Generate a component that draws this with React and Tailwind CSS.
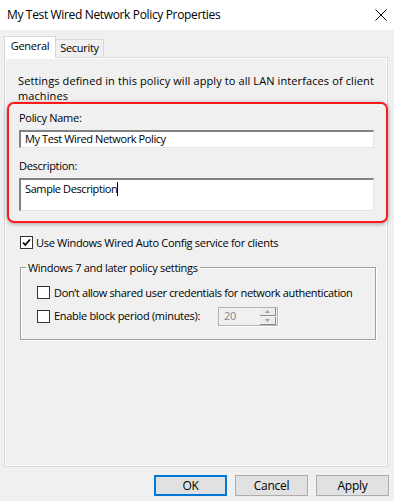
import React from "react";

const Check = ({ checked }) => (
  <span className="w-[13px] h-[13px] border border-[#333333] bg-white flex items-center justify-center shrink-0">
    {checked && (
      <svg width="9" height="9" viewBox="0 0 9 9">
        <polyline points="1,4.5 3.3,7 8,1.5" fill="none" stroke="#000" strokeWidth="1.8" />
      </svg>
    )}
  </span>
);

const Btn = ({ children, primary }) => (
  <button
    className={
      primary
        ? "w-[73px] h-[21px] bg-[#e1e1e1] border-2 border-[#0078d7] text-[12px] leading-none"
        : "w-[73px] h-[21px] bg-[#e1e1e1] border border-[#adadad] text-[12px] leading-none"
    }
  >
    {children}
  </button>
);

export default function App() {
  return (
    <div
      className="w-[394px] h-[501px] bg-[#f0f0f0] flex flex-col text-[11px] tracking-[-0.3px] text-black overflow-hidden"
      style={{ fontFamily: '"Open Sans", "Noto Sans", sans-serif' }}
    >
      {/* title bar */}
      <div className="h-[30px] bg-white flex items-center justify-between pl-[7px] pr-[7px] shrink-0">
        <span className="text-[12px] tracking-[-0.35px]">My Test Wired Network Policy Properties</span>
        <svg width="12" height="12" viewBox="0 0 12 12">
          <path d="M0.5 0.5 L11.5 11.5 M11.5 0.5 L0.5 11.5" stroke="#000" strokeWidth="1" />
        </svg>
      </div>

      {/* tabs */}
      <div className="flex items-end ml-[4px] mt-[6px] h-[21px] relative z-10">
        <div className="w-[52px] h-[22px] mb-[-1px] bg-white border border-b-0 border-[#d9d9d9] flex items-center justify-center pb-[2px]">
          General
        </div>
        <div className="w-[48px] h-[18px] border border-l-0 border-b-0 border-[#d9d9d9] bg-[#f0f0f0] flex items-center justify-center">
          Security
        </div>
      </div>

      {/* panel */}
      <div className="ml-[4px] w-[384px] h-[410px] border border-[#d9d9d9] shadow-[inset_1px_1px_0_#ffffff,inset_-1px_-1px_0_#ffffff] flex flex-col">
        <p className="pt-[15px] pl-[13px] leading-[15px] tracking-[0.1px]">
          Settings defined in this policy will apply to all LAN interfaces of client
          <br />
          machines
        </p>

        <div className="mt-[-1px] ml-[2px] w-[381px] h-[121px] border-2 border-[#ff1a1a] rounded-[7px] shadow-[0_1px_4px_rgba(0,0,0,0.35)] flex flex-col pl-[10px] pt-[6px]">
          <label className="leading-[15px]">Policy Name:</label>
          <div className="mt-[5px] w-[355px] h-[18px] bg-white border-t-2 border-l-2 border-b border-r border-t-[#828282] border-l-[#828282] border-b-[#e3e3e3] border-r-[#e3e3e3] flex items-center pl-[4px] tracking-[-0.4px]">
            My Test Wired Network Policy
          </div>
          <label className="mt-[10px] leading-[15px]">Description:</label>
          <div className="mt-[5px] w-[355px] h-[33px] bg-white border-t-2 border-l-2 border-b border-r border-t-[#828282] border-l-[#828282] border-b-[#e3e3e3] border-r-[#e3e3e3] flex items-start pl-[4px] pt-[1px] leading-[15px] tracking-[-0.4px]">
            Sample Description
            <span className="w-px h-[14px] bg-black mt-[1px]" />
          </div>
        </div>

        <div className="mt-[12px] ml-[15px] flex items-center gap-[3px] leading-[15px]">
          <Check checked />
          <span>Use Windows Wired Auto Config service for clients</span>
        </div>

        <fieldset className="mt-[10px] ml-[15px] w-[356px] h-[80px] border border-[#a0a0a0] shadow-[1px_1px_0_#ffffff,inset_1px_1px_0_#ffffff] flex flex-col">
          <legend className="ml-[5px] px-[2px] leading-[15px]">Windows 7 and later policy settings</legend>
          <div className="mt-[10px] ml-[16px] flex items-center gap-[4px] leading-[15px] tracking-[-0.35px]">
            <Check />
            <span>Don’t allow shared user credentials for network authentication</span>
          </div>
          <div className="mt-[6px] ml-[16px] h-[20px] flex items-center gap-[4px]">
            <Check />
            <span className="w-[160px] shrink-0">Enable block period (minutes):</span>
            <div className="w-[60px] h-[19px] border border-[#b4b4b4] shadow-[1px_1px_0_#ffffff] bg-[#f0f0f0] flex items-center justify-between pl-[5px] pr-[1px]">
              <span className="text-[#838383]">20</span>
              <div className="flex flex-col w-[16px] h-[17px]">
                <div className="h-[8px] bg-[#ececec] border-r border-b border-[#8a8a8a] flex items-center justify-center">
                  <svg width="5" height="3" viewBox="0 0 5 3"><path d="M0 3 L2.5 0 L5 3 Z" fill="#a0a0a0" /></svg>
                </div>
                <div className="h-[8px] mt-[1px] bg-[#ececec] border-r border-b border-[#8a8a8a] flex items-center justify-center">
                  <svg width="5" height="3" viewBox="0 0 5 3"><path d="M0 0 L5 0 L2.5 3 Z" fill="#a0a0a0" /></svg>
                </div>
              </div>
            </div>
          </div>
        </fieldset>
      </div>

      {/* buttons */}
      <div className="mt-[8px] pr-[5px] flex justify-end gap-[8px]">
        <Btn primary>OK</Btn>
        <Btn>Cancel</Btn>
        <Btn>Apply</Btn>
      </div>
    </div>
  );
}
